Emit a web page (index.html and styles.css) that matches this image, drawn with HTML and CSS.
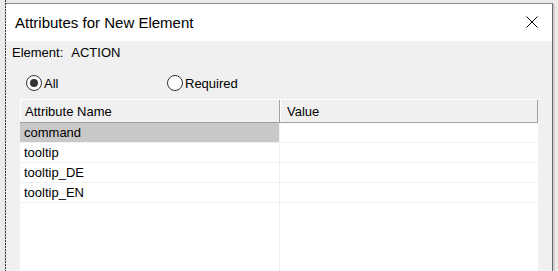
FILE: index.html
```html
<!DOCTYPE html>
<html>
<head>
<meta charset="utf-8">
<link rel="stylesheet" href="styles.css">
</head>
<body>
<div class="screen">
  <div class="gutter"></div>
  <div class="focus"></div>
  <div class="window">
    <div class="titlebar">
      <span class="title">Attributes for New Element</span>
      <svg class="close" width="12" height="12" viewBox="0 0 12 12"><path d="M0.5 0.5 L11.5 11.5 M11.5 0.5 L0.5 11.5" stroke="#000" stroke-width="1" fill="none"/></svg>
    </div>
    <div class="body">
      <div class="element-line"><span>Element:</span><span class="elname">ACTION</span></div>
      <div class="radios">
        <label class="radio first"><span class="dot checked"></span>All</label>
        <label class="radio"><span class="dot"></span>Required</label>
      </div>
      <div class="grid">
        <div class="head">
          <div class="hcell c1">Attribute Name</div>
          <div class="hcell c2">Value</div>
        </div>
        <div class="row"><div class="cell c1 sel">command</div><div class="cell c2"></div></div>
        <div class="row"><div class="cell c1">tooltip</div><div class="cell c2"></div></div>
        <div class="row"><div class="cell c1">tooltip_DE</div><div class="cell c2"></div></div>
        <div class="row"><div class="cell c1">tooltip_EN</div><div class="cell c2"></div></div>
        <div class="filler"><div class="cell c1"></div><div class="cell c2"></div></div>
      </div>
    </div>
  </div>
  <div class="shadow"></div>
</div>
</body>
</html>
```
FILE: styles.css
```css
html, body {
  margin: 0;
  padding: 0;
}
body {
  background: #ebebeb;
  font-family: "Liberation Sans", Arial, sans-serif;
  font-size: 13px;
  color: #000;
}
.screen {
  display: flex;
  height: 271px;
  overflow: hidden;
}
.gutter {
  width: 5px;
  flex: none;
}
.focus {
  width: 1px;
  flex: none;
  background: repeating-linear-gradient(to bottom, #3c3c3c 0 2px, #c8c8c8 2px 3px);
}
.window {
  width: 546px;
  flex: none;
  margin-top: 3px;
  border-top: 1px solid #8a8a8a;
  border-right: 1px solid #6a6a6a;
  display: flex;
  flex-direction: column;
}
.shadow {
  width: 2px;
  flex: none;
  margin-top: 4px;
  background: linear-gradient(to right, #c4c4c4, #dcdcdc);
}
.titlebar {
  height: 37px;
  background: #fff;
  display: flex;
  align-items: center;
  justify-content: space-between;
  padding-left: 9px;
  padding-right: 14px;
}
.title {
  font-size: 15px;
  line-height: 37px;
}
.close {
  display: block;
  margin-top: -1px;
}
.body {
  flex: 1;
  background: #f0f0f0;
  padding: 4px 0 0 6px;
  display: flex;
  flex-direction: column;
}
.element-line {
  line-height: 15px;
  display: flex;
}
.elname {
  margin-left: 8px;
}
.radios {
  display: flex;
  margin-top: 15px;
  margin-left: 14px;
  line-height: 15px;
}
.radio {
  display: flex;
  align-items: center;
}
.radio.first {
  width: 141px;
}
.dot {
  width: 14px;
  height: 14px;
  border: 1px solid #333;
  border-radius: 50%;
  background: #fff;
  margin-right: 2px;
  display: flex;
  align-items: center;
  justify-content: center;
  box-sizing: content-box;
}
.dot.checked::after {
  content: "";
  width: 8px;
  height: 8px;
  border-radius: 50%;
  background: #333;
}
.grid {
  margin-top: 8px;
  margin-left: 8px;
  width: 518px;
  flex: 1;
  background: #fff;
  display: flex;
  flex-direction: column;
}
.head {
  display: flex;
  background: #f0f0f0;
  border-top: 1px solid #fff;
  border-bottom: 1px solid #a0a0a0;
  height: 22px;
}
.hcell {
  box-sizing: border-box;
  border-left: 1px solid #fff;
  border-right: 1px solid #a0a0a0;
  line-height: 22px;
  padding-top: 1px;
}
.hcell.c1 {
  width: 260px;
  padding-left: 4px;
}
.hcell.c2 {
  width: 258px;
  padding-left: 6px;
}
.row {
  display: flex;
  height: 19px;
  border-bottom: 1px solid #f0f0f0;
}
.cell {
  box-sizing: border-box;
  line-height: 19px;
}
.cell.c1 {
  width: 260px;
  padding-left: 4px;
  border-right: 1px solid #f0f0f0;
}
.cell.c2 {
  width: 258px;
}
.cell.sel {
  background: #c8c8c8;
}
.filler {
  flex: 1;
  display: flex;
}
```
